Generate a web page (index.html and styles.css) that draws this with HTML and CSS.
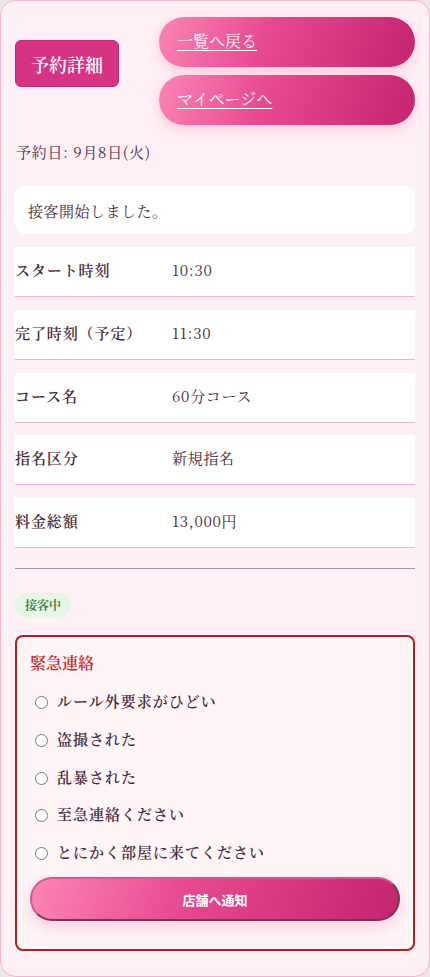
FILE: index.html
```html
<!DOCTYPE html>
<html lang="ja">
<head>
<meta charset="utf-8">
<title>予約詳細</title>
<link rel="stylesheet" href="styles.css">
</head>
<body>
<div class="card">
  <header class="head">
    <h1 class="title">予約詳細</h1>
    <nav class="nav">
      <a class="pill" href="#">一覧へ戻る</a>
      <a class="pill" href="#">マイページへ</a>
    </nav>
  </header>
  <p class="date">予約日: 9月8日(火)</p>
  <div class="message">接客開始しました。</div>
  <div class="rows">
    <div class="row"><span class="label">スタート時刻</span><span class="value">10:30</span></div>
    <div class="row"><span class="label">完了時刻（予定）</span><span class="value">11:30</span></div>
    <div class="row"><span class="label">コース名</span><span class="value">60分コース</span></div>
    <div class="row"><span class="label">指名区分</span><span class="value">新規指名</span></div>
    <div class="row"><span class="label">料金総額</span><span class="value">13,000円</span></div>
  </div>
  <hr class="rule">
  <span class="status">接客中</span>
  <section class="emergency">
    <h2 class="em-title">緊急連絡</h2>
    <div class="options">
      <label class="opt"><input type="radio" name="em"><span>ルール外要求がひどい</span></label>
      <label class="opt"><input type="radio" name="em"><span>盗撮された</span></label>
      <label class="opt"><input type="radio" name="em"><span>乱暴された</span></label>
      <label class="opt"><input type="radio" name="em"><span>至急連絡ください</span></label>
      <label class="opt"><input type="radio" name="em"><span>とにかく部屋に来てください</span></label>
    </div>
    <button class="notify" type="button">店舗へ通知</button>
  </section>
</div>
</body>
</html>
```
FILE: styles.css
```css
html, body {
  margin: 0;
  padding: 0;
}
body {
  background: #ede6e2;
  font-family: "Noto Serif CJK JP", serif;
  color: #4a2a3a;
}
.card {
  box-sizing: border-box;
  width: 430px;
  height: 977px;
  background: #fff0f5;
  border: 1px solid #f4b6cf;
  border-radius: 16px;
  padding: 16px 14px 0 14px;
}
.head {
  display: flex;
  align-items: flex-start;
  justify-content: space-between;
}
.title {
  margin: 23px 0 0;
  box-sizing: border-box;
  width: 104px;
  height: 47px;
  background: #d63384;
  border: 1px solid #c02a74;
  border-radius: 6px;
  color: #fff;
  font-size: 18px;
  font-weight: 600;
  display: flex;
  align-items: center;
  justify-content: center;
}
.nav {
  display: flex;
  flex-direction: column;
  gap: 8px;
  width: 256px;
}
.pill {
  display: flex;
  align-items: center;
  height: 50px;
  padding: 0 18px 4px;
  box-sizing: border-box;
  border-radius: 25px;
  background: linear-gradient(110deg, #fa86b6 0%, #e84b92 40%, #c42470 100%);
  box-shadow: 0 4px 12px rgba(232, 90, 150, 0.28);
  color: #fff;
  font-size: 16px;
  text-decoration: underline;
  text-underline-offset: 3px;
}
.date {
  margin: 17px 0 0 1px;
  font-size: 15px;
  line-height: 20px;
  letter-spacing: 0.7px;
  color: #4a3040;
}
.message {
  margin-top: 24px;
  height: 48px;
  box-sizing: border-box;
  background: #fff;
  border-radius: 10px;
  padding: 0 13px;
  display: flex;
  align-items: center;
  font-size: 15px;
  letter-spacing: 0.5px;
}
.rows {
  margin-top: 13px;
  display: flex;
  flex-direction: column;
  gap: 12.75px;
}
.row {
  height: 50px;
  box-sizing: border-box;
  background: #fff;
  border-bottom: 1px solid #f0b5cc;
  display: flex;
  align-items: center;
  padding-bottom: 4px;
  font-size: 15px;
}
.label {
  width: 157px;
  font-weight: 600;
  letter-spacing: 0.9px;
}
.value {
  letter-spacing: 0.7px;
}
.rule {
  margin: 20px 0 0;
  border: 0;
  border-top: 1px solid #9c9a9b;
  height: 0;
}
.status {
  display: inline-block;
  margin-top: 24px;
  padding: 0 10px;
  height: 24px;
  line-height: 24px;
  border-radius: 12px;
  background: #e5f5e6;
  color: #2e6b33;
  font-size: 12px;
  font-weight: 600;
}
.emergency {
  margin-top: 18px;
  box-sizing: border-box;
  height: 316px;
  border: 2px solid #b81c24;
  border-radius: 8px;
  background: #fff5f7;
  padding: 14px 13px 0;
}
.em-title {
  margin: 0;
  font-size: 16px;
  font-weight: 600;
  color: #c62828;
  line-height: 24px;
}
.options {
  margin-top: 7px;
  display: flex;
  flex-direction: column;
}
.opt {
  display: flex;
  align-items: center;
  height: 37.7px;
  font-size: 15px;
  font-weight: 600;
  letter-spacing: 1px;
  color: #4a2a3a;
}
.opt input {
  margin: 4px 9px 0 5px;
  width: 13px;
  height: 13px;
}
.notify {
  display: block;
  margin-top: 7px;
  width: 100%;
  height: 44px;
  border-radius: 22px;
  border: 2px outset #d05a90;
  background: linear-gradient(110deg, #fa86b6 0%, #e84b92 40%, #c42470 100%);
  box-shadow: 0 6px 14px rgba(232, 90, 150, 0.25);
  color: #fff;
  font-family: "Noto Sans CJK JP", sans-serif;
  font-weight: 700;
  font-size: 13px;
}
```
